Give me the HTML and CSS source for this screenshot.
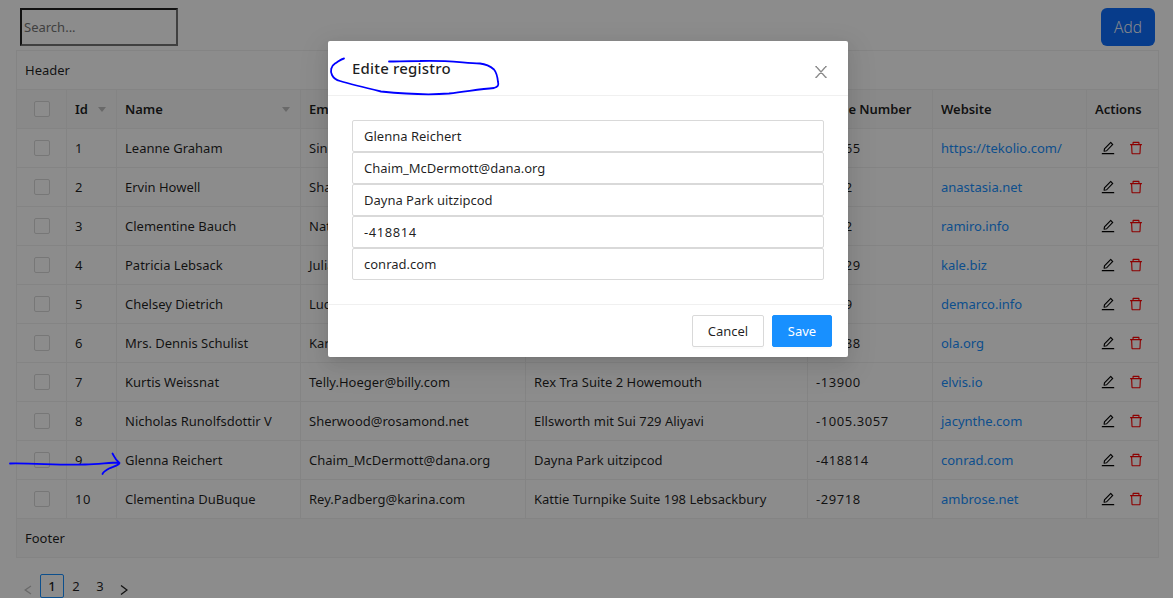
FILE: index.html
```html
<!DOCTYPE html>
<html lang="en">
<head>
<meta charset="utf-8">
<title>Records</title>
<link rel="stylesheet" href="styles.css">
</head>
<body>
<svg class="defs" width="0" height="0">
  <symbol id="edit" viewBox="64 64 896 896"><path d="M761.100 288.300L687.300 215 325.800 577.700 301.200 692.500 400.500 672.500zM880 836H144c-17.700 0-32 14.300-32 32v36c0 4.400 3.600 8 8 8h784c4.400 0 8-3.600 8-8v-36c0-17.700-14.300-32-32-32zM257.700 752c2 0 4-.2 6-.5L431.900 722c2-.4 3.900-1.300 5.300-2.800l423.900-423.900c3.900-3.900 3.900-10.200 0-14.100L694.900 114.900c-1.900-1.900-4.400-2.900-7.100-2.900s-5.200 1-7.100 2.900L256.800 538.800c-1.500 1.500-2.400 3.300-2.800 5.300l-29.500 168.200c-1.900 11.100 1.500 21.900 9.400 29.800 6.600 6.400 14.900 9.900 23.800 9.900z" fill-rule="evenodd"/></symbol>
  <symbol id="trash" viewBox="64 64 896 896"><path d="M360 184h-8c4.400 0 8-3.600 8-8v8h304v-8c0 4.400 3.600 8 8 8h-8v72h72v-80c0-35.300-28.700-64-64-64H352c-35.300 0-64 28.700-64 64v80h72v-72zm504 72H160c-17.700 0-32 14.300-32 32v32c0 4.400 3.600 8 8 8h60.400l24.700 523c1.600 34.100 29.800 61 63.900 61h454c34.200 0 62.300-26.800 63.900-61l24.700-523H888c4.400 0 8-3.600 8-8v-32c0-17.700-14.300-32-32-32zM731.300 840H292.700l-24.200-512h487l-24.200 512z"/></symbol>
</svg>
<main class="page">
  <div class="toolbar">
    <input class="search" type="text" placeholder="Search...">
    <button class="add">Add</button>
  </div>
  <section class="panel">
    <div class="title">Header</div>
    <div class="row head"><div class="check"><i></i></div><div>Id<b class="caret"></b></div><div>Name<b class="caret"></b></div><div>Email</div><div>Address</div><div>Phone Number</div><div>Website</div><div>Actions</div></div>
    <div class="row"><div class="check"><i></i></div><div class="num">1</div><div>Leanne Graham</div><div>Sincere@april.biz</div><div>Kulas Light</div><div class="num">-12365</div><div><a>https://tekolio.com/</a></div><div class="acts"><svg><use href="#edit"/></svg><svg class="red"><use href="#trash"/></svg></div></div>
    <div class="row"><div class="check"><i></i></div><div class="num">2</div><div>Ervin Howell</div><div>Shanna@melissa.tv</div><div>Victor Plains</div><div class="num">-7272</div><div><a>anastasia.net</a></div><div class="acts"><svg><use href="#edit"/></svg><svg class="red"><use href="#trash"/></svg></div></div>
    <div class="row"><div class="check"><i></i></div><div class="num">3</div><div>Clementine Bauch</div><div>Nathan@yesenia.net</div><div>Douglas Extension</div><div class="num">-5032</div><div><a>ramiro.info</a></div><div class="acts"><svg><use href="#edit"/></svg><svg class="red"><use href="#trash"/></svg></div></div>
    <div class="row"><div class="check"><i></i></div><div class="num">4</div><div>Patricia Lebsack</div><div>Julianne.OConner@kory.org</div><div>Hoeger Mall</div><div class="num">-12329</div><div><a>kale.biz</a></div><div class="acts"><svg><use href="#edit"/></svg><svg class="red"><use href="#trash"/></svg></div></div>
    <div class="row"><div class="check"><i></i></div><div class="num">5</div><div>Chelsey Dietrich</div><div>Lucio_Hettinger@annie.ca</div><div>Skiles Walks</div><div class="num">-1289</div><div><a>demarco.info</a></div><div class="acts"><svg><use href="#edit"/></svg><svg class="red"><use href="#trash"/></svg></div></div>
    <div class="row"><div class="check"><i></i></div><div class="num">6</div><div>Mrs. Dennis Schulist</div><div>Karley_Dach@jasper.info</div><div>Norberto Crossing</div><div class="num">-14788</div><div><a>ola.org</a></div><div class="acts"><svg><use href="#edit"/></svg><svg class="red"><use href="#trash"/></svg></div></div>
    <div class="row"><div class="check"><i></i></div><div class="num">7</div><div>Kurtis Weissnat</div><div>Telly.Hoeger@billy.com</div><div>Rex Tra Suite 2 Howemouth</div><div class="num">-13900</div><div><a>elvis.io</a></div><div class="acts"><svg><use href="#edit"/></svg><svg class="red"><use href="#trash"/></svg></div></div>
    <div class="row"><div class="check"><i></i></div><div class="num">8</div><div>Nicholas Runolfsdottir V</div><div>Sherwood@rosamond.net</div><div>Ellsworth mit Sui 729 Aliyavi</div><div class="num">-1005.3057</div><div><a>jacynthe.com</a></div><div class="acts"><svg><use href="#edit"/></svg><svg class="red"><use href="#trash"/></svg></div></div>
    <div class="row"><div class="check"><i></i></div><div class="num">9</div><div>Glenna Reichert</div><div>Chaim_McDermott@dana.org</div><div>Dayna Park uitzipcod</div><div class="num">-418814</div><div><a>conrad.com</a></div><div class="acts"><svg><use href="#edit"/></svg><svg class="red"><use href="#trash"/></svg></div></div>
    <div class="row"><div class="check"><i></i></div><div class="num">10</div><div>Clementina DuBuque</div><div>Rey.Padberg@karina.com</div><div>Kattie Turnpike Suite 198 Lebsackbury</div><div class="num">-29718</div><div><a>ambrose.net</a></div><div class="acts"><svg><use href="#edit"/></svg><svg class="red"><use href="#trash"/></svg></div></div>
    <div class="title foot">Footer</div>
  </section>
  <nav class="pager">
    <svg class="arrow off" viewBox="0 0 8 10"><path d="M7 1L1.200 5 7 9"/></svg>
    <span class="current">1</span><span>2</span><span>3</span>
    <svg class="arrow" viewBox="0 0 8 10"><path d="M1 .5L7 5 1 9.500"/></svg>
  </nav>
</main>
<div class="mask">
  <div class="modal">
    <header><h1>Edite registro</h1><svg class="close" viewBox="0 0 12 12"><path d="M1.200 .5L10.800 11.500M10.800 .5L1.200 11.500M.3 .5h1.700M10 .5h1.700M.3 11.500h1.700M10 11.500h1.700"/></svg></header>
    <div class="fields">
      <input value="Glenna Reichert"><input value="Chaim_McDermott@dana.org"><input value="Dayna Park uitzipcod"><input class="num" value="-418814"><input value="conrad.com">
    </div>
    <footer><button>Cancel</button><button class="save">Save</button></footer>
  </div>
</div>
<svg class="ink" viewBox="0 0 1173 598">
  <path d="M344 58.500C341 59 339 61 335 63.500C331 66 330 71 332 75C334 79 336 80 340 81C350 84 362 87 381 91.500C400 93.500 425 95.500 449 93.500C467 91.500 480 89 494 88C498 87 499 85 498 82C497.500 77 497 73 494 69.500C490 66 485 64 480 63.500C460 62.500 445 60 420 61C405 61 397 61.500 389 61.500"/>
  <path d="M10 463.500C35 463 60 465.500 85 464.500C100 464 110 462.500 119 462.500M112.500 453.500C114 456 115 460 119.500 463C118 466 113 466.500 109 468.500C106 470.500 103 472 102.500 474"/>
</svg>
</body>
</html>
```
FILE: styles.css
```css
* { box-sizing: border-box; }
body {
  margin: 0;
  height: 598px;
  overflow: hidden;
  background: #fff;
  color: rgba(0, 0, 0, .88);
  font: 13px/22px "Noto Sans", "Open Sans", sans-serif;
}
input, button { font: inherit; color: inherit; }
.defs { position: absolute; }
.page { padding: 8px 15px 0 16px; }
.toolbar { display: flex; justify-content: space-between; padding: 0 3px 0 4px; height: 42px; }
.search { width: 158px; height: 38px; padding: 1px 2px; border: 2px inset #767676; background: #fff; }
.search::placeholder { color: #757575; }
.add { width: 54px; height: 38px; padding: 0; border: 0; border-radius: 6px; background: #0d6efd; color: #fff; font-family: "Open Sans", "Noto Sans", sans-serif; font-size: 15.5px; font-weight: 300; }
.panel { width: 1143px; border: 1px solid #f0f0f0; border-bottom: 0; }
.title { height: 38px; padding: 8px; }
.foot { height: 40px; border-top: 1px solid #f0f0f0; border-bottom: 1px solid #f0f0f0; background: #fafafa; }
.row { display: grid; grid-template-columns: 50px 50px 184px 225px 282px 125px 154px 71px; height: 39px; border-top: 1px solid #f0f0f0; }
.row > div { padding: 8px; border-right: 1px solid #f0f0f0; white-space: nowrap; overflow: hidden; }
.row > div:last-child { border-right: 0; }
.num { letter-spacing: .55px; }
.head { background: #fafafa; font-weight: 600; letter-spacing: -.05px; }
.head > div { display: flex; justify-content: space-between; align-items: center; }
.row > .check { display: flex; justify-content: center; align-items: center; }
.check i { width: 16px; height: 16px; border: 1px solid #d9d9d9; border-radius: 2px; background: #fff; }
.caret { margin-right: 2px; border: 4px solid transparent; border-top: 5px solid #bfbfbf; border-bottom: 0; }
.row a { color: #1890ff; }
.row > .acts { display: flex; align-items: center; gap: 14px; padding: 0 14px; }
.acts svg { width: 14px; height: 14px; fill: #000; }
.acts .red { fill: #f00; }
.pager { display: flex; align-items: center; height: 24px; margin-top: 16px; }
.pager span { width: 24px; height: 24px; line-height: 24px; text-align: center; }
.pager .current { border: 1px solid #1890ff; border-radius: 2px; line-height: 22px; font-weight: 500; }
.arrow { width: 8px; height: 10px; margin: 8px 8px 0; fill: none; stroke: #222; stroke-width: 1.300; }
.off { stroke: #bfbfbf; }
.mask { position: absolute; inset: 0; padding-top: 41px; background: rgba(0, 0, 0, .45); }
.modal {
  width: 520px;
  height: 316px;
  margin-left: 328px;
  border-radius: 2px;
  background: #fff;
  box-shadow: 0 3px 6px -4px rgba(0, 0, 0, .12), 0 6px 16px rgba(0, 0, 0, .08), 0 9px 28px 8px rgba(0, 0, 0, .05);
}
.modal header { display: flex; justify-content: space-between; height: 55px; padding: 16px 21px 0 24px; border-bottom: 1px solid #f0f0f0; }
.modal h1 { margin: 0; font-size: 15px; line-height: 22px; font-weight: 500; letter-spacing: .18px; }
.close { width: 12px; height: 12px; margin-top: 9px; fill: none; stroke: #8c8c8c; stroke-width: 1.300; }
.fields { display: flex; flex-direction: column; height: 208px; padding: 24px; }
.fields input { height: 32px; padding: 4px 11px; border: 1px solid #d9d9d9; border-radius: 2px; background: #fff; }
.modal footer { display: flex; justify-content: flex-end; gap: 8px; height: 53px; padding: 10px 16px; border-top: 1px solid #f0f0f0; }
.modal button { width: 72px; height: 32px; padding: 0; border: 1px solid #d9d9d9; border-radius: 2px; background: #fff; box-shadow: 0 2px 0 rgba(0, 0, 0, .015); }
.modal .save { width: 60px; border-color: #1890ff; background: #1890ff; color: #fff; }
.ink { position: absolute; inset: 0; width: 1173px; height: 598px; fill: none; stroke: #00f; stroke-width: 1.800; stroke-linecap: round; stroke-linejoin: round; pointer-events: none; }
```
